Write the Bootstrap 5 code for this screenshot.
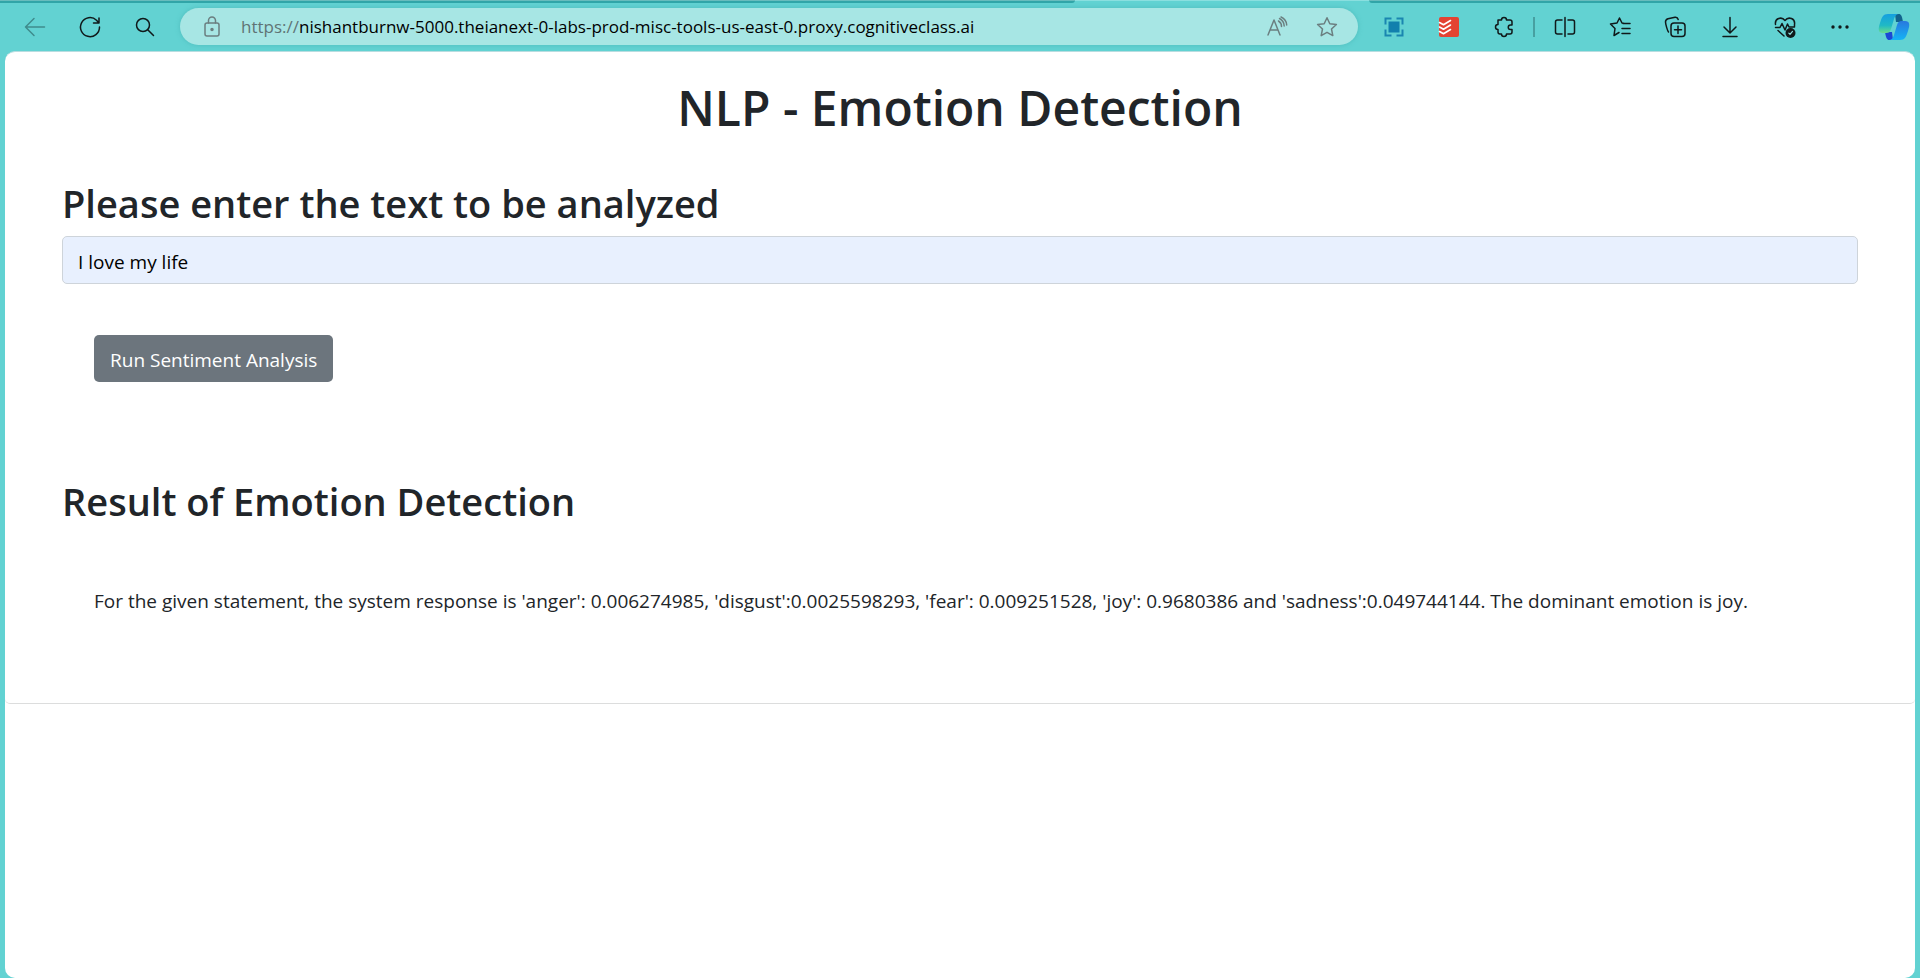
<!DOCTYPE html>
<html lang="en">
<head>
<meta charset="utf-8">
<meta name="viewport" content="width=device-width, initial-scale=1">
<title>NLP - Emotion Detection</title>
<link href="https://cdn.jsdelivr.net/npm/bootstrap@5.3.0/dist/css/bootstrap.min.css" rel="stylesheet">
<style>
body{background:#62d2d2;font-family:"Open Sans","Noto Sans",sans-serif;font-size:19px;line-height:30px;color:#212529}
.tabstrip{height:3px}
.tabstrip span{background:#31a5a8;border-top:1px solid #68bcbd}
.tab-left{width:56%;border-bottom-right-radius:3px}
.tab-gap{width:294px;border-top:1px solid #8adfdf}
.tab-right{border-bottom-left-radius:3px}
.toolbar{height:48px;padding:5px 0 6px 7px}
.tool{width:55px;height:37px;padding:0;border:0;background:none;color:#10191a;display:flex;align-items:center;justify-content:center;flex:none}
.tool svg,.address svg{width:24px;height:24px;fill:none;stroke:currentColor;stroke-width:1.5;stroke-linecap:round;stroke-linejoin:round;flex:none}
.tool.off{color:#3f8c8d}
.tool.copilot{width:53px}
.tool.copilot svg{width:32px;height:30px}
.split{width:2px;height:20px;margin:0 2px;background:#47a0a1}
.address{height:37px;margin:0 8px;padding:0 6px 0 20px;border-radius:19px;background:#a7e6e4;color:#6b7f80;box-shadow:0 0 5px #4fbcbd}
.address .url{font-size:17px;line-height:24px;color:#000;margin-left:17px;text-decoration:none;white-space:nowrap}
.address .url span{color:#5f7475}
.address .tool{width:50px;color:#6b7f80}
.viewport{background:#fff;margin:0 5px;border-radius:10px;border-top:1px solid #b8dde0;overflow:hidden}
.panel{border:0;border-bottom:1px solid #dcdddd;border-radius:0 0 5px 5px;padding:26px 57px 87px}
h1{font-size:48px;line-height:60px;font-weight:600;margin:0}
h2{font-size:38px;line-height:48px;font-weight:600;margin:0}
.ask{margin-top:41px}
.entry{height:48px;margin-top:9px;font-size:19px;color:#000;background:#e8f0fe;border:1px solid #ced4da;border-radius:5px;padding:9px 15px 5px}
.entry:focus{background:#e8f0fe}
.action{margin-top:51px}
.run{font-size:19px;line-height:30px;padding:10px 16px 7px;border-radius:5px;border:0;background:#6c757d}
.result{margin-top:95px}
.answer{margin-top:61px}
</style>
</head>
<body class="min-vh-100 d-flex flex-column">
<div class="tabstrip d-flex"><span class="tab-left"></span><div class="tab-gap"></div><span class="tab-right flex-grow-1"></span></div>
<nav class="toolbar d-flex align-items-center">
  <button class="tool off" aria-label="Back"><svg viewBox="0 0 24 24"><path d="M21.500 12H2.500M11 3.500L2.500 12l8.500 8.500"/></svg></button>
  <button class="tool" aria-label="Refresh"><svg viewBox="0 0 24 24"><path d="M21.500 12A9.500 9.500 0 1 1 18.500 5.200L20.500 7.500M21 3v5h-5.500"/></svg></button>
  <button class="tool" aria-label="Search"><svg viewBox="0 0 24 24"><circle cx="10" cy="10" r="6.500"/><path d="M15 15l5.500 5.500"/></svg></button>
  <div class="address d-flex align-items-center flex-grow-1">
    <svg viewBox="0 0 24 24"><rect x="5" y="8" width="14" height="13" rx="2"/><path d="M8.500 8V5.500a3.500 3.500 0 0 1 7 0V8"/><circle cx="12" cy="14.500" r="1" fill="currentColor"/></svg>
    <a class="url me-auto" href="#"><span>https://</span>nishantburnw-5000.theianext-0-labs-prod-misc-tools-us-east-0.proxy.cognitiveclass.ai</a>
    <button class="tool" aria-label="Read aloud"><svg viewBox="0 0 24 24"><path d="M3 20L9 5l6 15M5.200 15h7.600M13.500 6c2 1.200 3 3.200 3 5.500M14.500 3.500c3 1.500 4.500 4 4.700 7.500M16 2c3.500 1.500 5.500 4.500 5.700 8"/></svg></button>
    <button class="tool" aria-label="Add to favorites"><svg viewBox="0 0 24 24"><path d="M12 2.800l2.800 6 6.600.7-4.900 4.500 1.300 6.600L12 17.300l-5.800 3.300L7.500 14 2.600 9.500l6.600-.7z"/></svg></button>
  </div>
  <button class="tool" aria-label="Screen capture"><svg viewBox="0 0 24 24"><g stroke="#1a86b0" stroke-width="2" stroke-linecap="butt" stroke-linejoin="miter"><path d="M3.500 9.500v-6h6M14.500 3.500h6v6M20.500 14.500v6h-6M9.500 20.500h-6v-6"/></g><path fill="#1280ad" stroke="none" d="M6.500 6.500h11v11h-11z"/></svg></button>
  <button class="tool" aria-label="Todoist"><svg viewBox="0 0 24 24"><rect x="2" y="2" width="20" height="20" rx="2" fill="#e44332" stroke="none"/><path stroke="#fff" stroke-width="1.600" d="M2.500 7.500l4 2.300L13.500 5.500M2.500 12l4 2.300 7-4.300M2.500 16.500l4 2.300 7-4.300"/></svg></button>
  <button class="tool" aria-label="Extensions"><svg viewBox="0 0 24 24"><path d="M6 5h3.500a2.500 2.500 0 0 1 5 0H18a2 2 0 0 1 2 2v3h-1.500a2 2 0 0 0 0 4.500H20V17a2 2 0 0 1-2 2h-3.500a2.500 2.500 0 0 1-5 0H8a2 2 0 0 1-2-2v-2.500a2.500 2.500 0 0 1 0-5z"/></svg></button>
  <span class="split"></span>
  <button class="tool" aria-label="Split screen"><svg viewBox="0 0 24 24"><path d="M9 5H4.500a2 2 0 0 0-2 2v10a2 2 0 0 0 2 2H9M15 5h4.500a2 2 0 0 1 2 2v10a2 2 0 0 1-2 2H15M12 2.500v19"/></svg></button>
  <button class="tool" aria-label="Favorites"><svg viewBox="0 0 24 24"><path d="M16.500 8.500L14 8l-2.500-5L9 8l-6.500 1 4.500 4.500L6 20.500l5-3M15 8.500h7M14 13.500h8M14 18.500h8"/></svg></button>
  <button class="tool" aria-label="Collections"><svg viewBox="0 0 24 24"><rect x="8" y="8" width="14" height="13.500" rx="3"/><path d="M15 11v7.500M11.500 14.800h7M5.500 17C4.500 16 2.500 9 2.500 7s1-2.800 2.500-3.200l7-1.600c1.700-.3 2.700.5 3.200 2.300"/></svg></button>
  <button class="tool" aria-label="Downloads"><svg viewBox="0 0 24 24"><path d="M12 2.500v15M6 12l6 6 6-6M5 21.500h14"/></svg></button>
  <button class="tool" aria-label="Browser essentials"><svg viewBox="0 0 24 24"><path d="M2.500 9.500C1.500 3.500 8.500 1 12 5.500 15.500 1 22.500 3.500 21.500 9.500v2M2.500 12.500H7l2-4 3 6.500 2.500-6 1.500 3h5.500M5 15.500l6 5.500"/><circle cx="17.500" cy="18" r="5" fill="#10191a" stroke="none"/><path stroke="#8fdede" stroke-width="1.200" d="M15.800 18.200l1.200 1.200 2.500-3"/></svg></button>
  <button class="tool" aria-label="Settings and more"><svg viewBox="0 0 24 24"><g fill="currentColor" stroke="none"><circle cx="5" cy="12" r="1.700"/><circle cx="12" cy="12" r="1.700"/><circle cx="19" cy="12" r="1.700"/></g></svg></button>
  <button class="tool copilot" aria-label="Copilot"><svg viewBox="0 0 32 30"><defs><linearGradient id="ca" x1="0" y1="0" x2="0" y2="1"><stop stop-color="#159fe0"/><stop offset=".6" stop-color="#20b9c5"/><stop offset="1" stop-color="#68dc8b"/></linearGradient><linearGradient id="cb" x1="0" y1="0" x2="0" y2="1"><stop stop-color="#2878de"/><stop offset="1" stop-color="#14b3f5"/></linearGradient></defs><g stroke="none"><path fill="#12638d" d="M17 2h4c2 0 3 2 4 8h-7z"/><path fill="#1b48d5" d="M15 28h-4c-2 0-3-2-4-8h7z"/><path fill="url(#ca)" d="M10 2h12c-4 0-5 2-6 5l-3 10c-1 3-2 4-5 4H5c-5 0-5-4-3-10C4 5 5 2 10 2z"/><path fill="url(#cb)" d="M22 28H10c4 0 5-2 6-5l3-10c1-3 2-4 5-4h3c5 0 5 4 3 10-2 6-3 9-8 9z"/></g></svg></button>
</nav>
<main class="viewport flex-grow-1">
  <div class="panel">
    <h1 class="text-center">NLP - Emotion Detection</h1>
    <h2 class="ask"><label for="textToAnalyze">Please enter the text to be analyzed</label></h2>
    <input class="form-control entry" id="textToAnalyze" type="text" value="I love my life">
    <div class="action px-4 mx-2"><button class="btn btn-secondary run" type="button">Run Sentiment Analysis</button></div>
    <h2 class="result">Result of Emotion Detection</h2>
    <div class="answer px-4 mx-2" id="system_response">For the given statement, the system response is 'anger': 0.006274985, 'disgust':0.0025598293, 'fear': 0.009251528, 'joy': 0.9680386 and 'sadness':0.049744144. The dominant emotion is joy.</div>
  </div>
</main>
<script src="https://cdn.jsdelivr.net/npm/bootstrap@5.3.0/dist/js/bootstrap.bundle.min.js"></script>
</body>
</html>
